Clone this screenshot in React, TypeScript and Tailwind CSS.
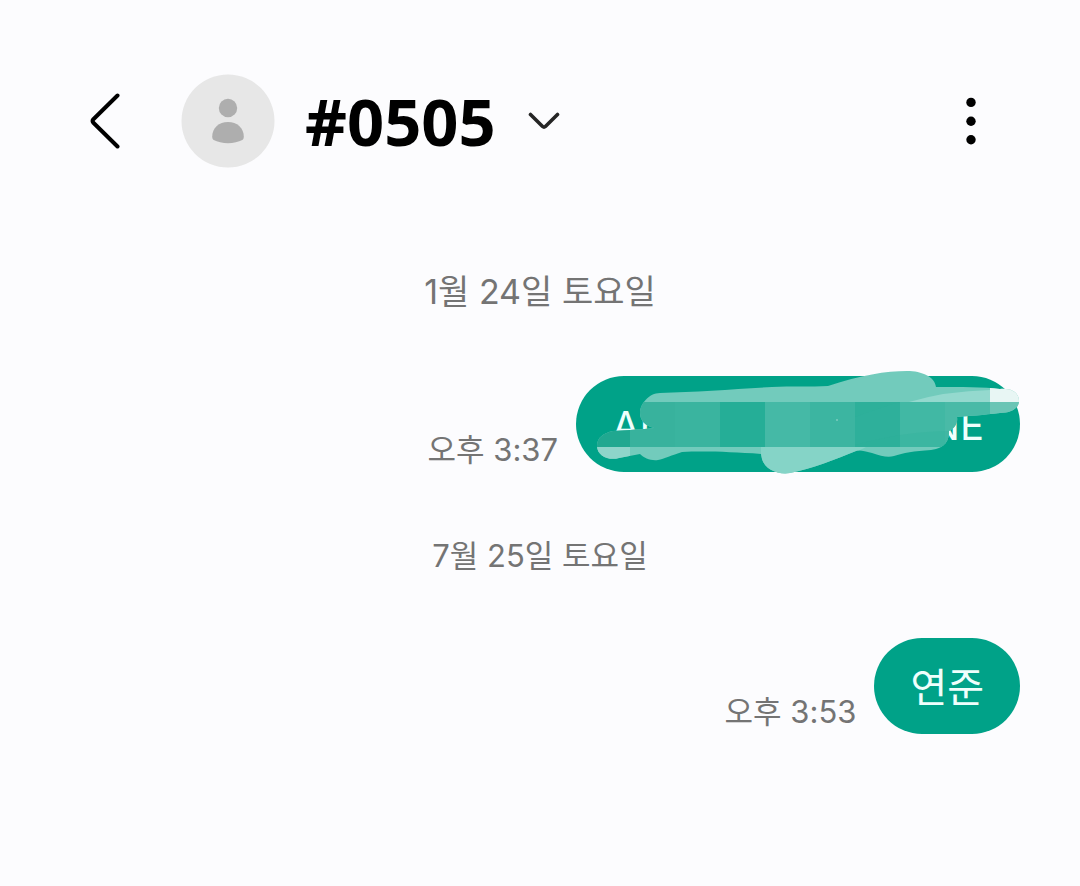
import type { ReactNode } from 'react'

function BackIcon() {
  return (
    <svg width="30" height="56" viewBox="0 0 30 56" fill="none" stroke="#000" strokeWidth="4" strokeLinecap="round" strokeLinejoin="round" aria-hidden="true">
      <path d="M27.5 2.5 3.4 26.2q-1.6 1.8 0 3.6L27.5 53.5" />
    </svg>
  )
}

function Avatar() {
  return (
    <svg width="94" height="94" viewBox="0 0 94 94" className="shrink-0" aria-hidden="true">
      <circle cx="47" cy="47" r="46.5" fill="#e7e7e7" />
      <circle cx="47" cy="34" r="9.2" fill="#aeaeae" />
      <path d="M31.2 62.5C31.2 54 38 48 47 48s15.800 6 15.800 14.500c0 2-.5 3-1.500 3.600C57.500 68.200 52.500 69.200 47 69.200s-10.500-1-14.300-3.100c-1-.6-1.500-1.600-1.500-3.600z" fill="#aeaeae" />
    </svg>
  )
}

function ChevronIcon() {
  return (
    <svg width="32" height="18" viewBox="0 0 32 18" fill="none" stroke="#252525" strokeWidth="3.6" strokeLinecap="round" strokeLinejoin="round" aria-hidden="true">
      <path d="M2.500 2.500 14.600 14.500q1.400 1.200 2.800 0L29.500 2.500" />
    </svg>
  )
}

function MoreIcon() {
  return (
    <svg width="10" height="48" viewBox="0 0 10 48" aria-hidden="true">
      <circle cx="5" cy="5.400" r="4.700" />
      <circle cx="5" cy="24.200" r="4.700" />
      <circle cx="5" cy="42.800" r="4.700" />
    </svg>
  )
}

const blocks = [
  { x: 0, w: 54, fill: '#20a890' },
  { x: 54, w: 45, fill: '#38b29d' },
  { x: 99, w: 45, fill: '#3ab49f' },
  { x: 144, w: 45, fill: '#25ae97' },
  { x: 189, w: 45, fill: '#45b9a6' },
  { x: 234, w: 45, fill: '#3cb5a1' },
  { x: 279, w: 45, fill: '#2eb09b' },
  { x: 324, w: 45, fill: '#41b8a4' },
  { x: 369, w: 45, fill: '#49baa7' },
  { x: 414, w: 30, fill: '#6ac5b5' },
]

// brush strokes that blank out the middle of a message
function Scribble() {
  return (
    <svg width="444" height="106" viewBox="0 -6 444 106" className="absolute -top-[6px] left-0" aria-hidden="true">
      <defs>
        <clipPath id="brush">
          <path d="M64 37C64 28 73 17 84 17C120 16 160 13 196 11C215 10 235 11 252 10C285-1 310-5 331-5C346-5 359 1 360 11C385 11 408 11 424 13C436 12 443 17 443 25C443 33 434 37 424 37C407 39 393 40 381 41C382 47 379 52 373 55C373 64 370 72 355 74C338 75 327 77 318 80C312 82 305 80 296 77C288 75 284 74 280 75C258 84 238 92 214 97C203 99 189 94 186 83L185 78C155 76 130 75 106 76C96 79 88 83 82 84C75 85 68 82 64 78L43 82C33 85 21 80 21 70C21 61 28 57 37 55C47 54 59 54 78 52C69 50 64 44 64 37Z" />
        </clipPath>
      </defs>
      <g clipPath="url(#brush)">
        <rect y="-6" width="444" height="106" fill="#72cbbc" />
        <path d="M333 26Q370 15 414 14V26Z" fill="#94d9ce" />
        <rect x="414" y="0" width="30" height="26" fill="#e8f6f4" />
        {blocks.map(b => (
          <rect key={b.x} x={b.x} y="26" width={b.w} height="45" fill={b.fill} />
        ))}
        <path d="M279 41Q306 31 324 26H279Z" fill="#2aae97" opacity=".3" />
        <path d="M279 69Q330 55 373 55V71H279Z" fill="#2aae97" opacity=".25" />
        <rect y="71" width="54" height="29" fill="#8ed5ca" />
        <path d="M185 71H290L234 100H185Z" fill="#85d4c7" />
        <circle cx="261" cy="44" r="1" fill="#7ccdbf" />
      </g>
    </svg>
  )
}

function Message({ time, children }: { time: string; children: ReactNode }) {
  return (
    <div className="flex items-end justify-end gap-[18px]">
      <time className="text-[31px] leading-11 text-[#747474]">{time}</time>
      {children}
    </div>
  )
}

export default function App() {
  return (
    <div className="min-h-screen bg-[#fcfcfe] font-[Inter,'Noto_Sans_CJK_KR',sans-serif]">
      <header className="flex items-center px-[90px] pt-[74px]">
        <button type="button" aria-label="뒤로"><BackIcon /></button>
        <div className="ml-[61px]"><Avatar /></div>
        <button type="button" className="ml-[30px] flex items-center gap-8">
          <h1 className="font-['Open_Sans',sans-serif] text-[65px] leading-[90px] font-bold text-black">#0505</h1>
          <ChevronIcon />
        </button>
        <button type="button" aria-label="더보기" className="mr-[14px] ml-auto"><MoreIcon /></button>
      </header>

      <main className="px-[60px] pt-[100px]">
        <h2 className="text-center text-[34px] leading-12 text-[#747474]">1월 24일 토요일</h2>
        <div className="mt-[60px]">
          <Message time="오후 3:37">
            <div className="relative flex h-24 w-[444px] items-center justify-between rounded-full bg-[#00a288] px-9 pt-1 text-[40px] text-[#effffc]">
              <span>AN</span>
              <span>NE</span>
              <Scribble />
            </div>
          </Message>
        </div>
        <h2 className="mt-[60px] text-center text-[31px] leading-12 text-[#747474]">7월 25일 토요일</h2>
        <div className="mt-[58px]">
          <Message time="오후 3:53">
            <div className="flex h-24 items-center rounded-full bg-[#00a288] px-9 pt-1 text-[40px] text-[#effffc]">연준</div>
          </Message>
        </div>
      </main>
    </div>
  )
}
